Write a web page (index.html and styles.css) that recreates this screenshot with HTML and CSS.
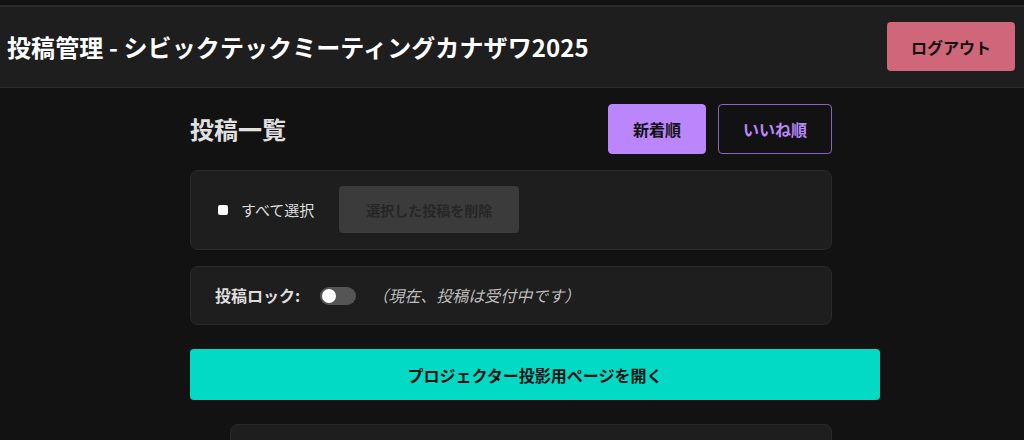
FILE: index.html
```html
<!DOCTYPE html>
<html lang="ja">
<head>
<meta charset="utf-8">
<title>投稿管理</title>
<link rel="stylesheet" href="styles.css">
</head>
<body>
<header class="app-header">
  <h1 class="app-title">投稿管理 - シビックテックミーティングカナザワ2025</h1>
  <button class="btn btn-logout">ログアウト</button>
</header>
<main class="container">
  <div class="list-head">
    <h2 class="list-title">投稿一覧</h2>
    <div class="sort-group">
      <button class="btn btn-sort active">新着順</button>
      <button class="btn btn-sort">いいね順</button>
    </div>
  </div>
  <section class="card select-bar">
    <label class="select-all"><input type="checkbox" class="check"><span>すべて選択</span></label>
    <button class="btn btn-delete">選択した投稿を削除</button>
  </section>
  <section class="card lock-bar">
    <span class="lock-label">投稿ロック:</span>
    <span class="toggle"><span class="knob"></span></span>
    <span class="lock-status">（現在、投稿は受付中です）</span>
  </section>
  <button class="btn btn-projector">プロジェクター投影用ページを開く</button>
  <ul class="post-list">
    <li class="card post-item"></li>
  </ul>
</main>
</body>
</html>
```

FILE: styles.css
```css
* { margin: 0; padding: 0; }
html, body { background: #121212; }
body {
  font-family: "Noto Sans CJK JP", "Noto Sans", sans-serif;
  color: #e0e0e0;
  padding-top: 5px;
  overflow: hidden;
}
.btn {
  font-family: inherit;
  cursor: pointer;
  border: 1px solid transparent;
  font-weight: 700;
  font-size: 16px;
  line-height: 20px;
}
.app-header {
  background: #1e1e1e;
  border-top: 2px solid #2c2c2c;
  border-bottom: 1px solid #2c2c2c;
  display: flex;
  align-items: center;
  justify-content: space-between;
  padding: 15px 9px 16px 7px;
}
.app-title {
  font-size: 24px;
  font-weight: 700;
  color: #ffffff;
  line-height: 32px;
  letter-spacing: 0.1px;
}
.btn-logout {
  background: #cf6679;
  color: #121212;
  border: none;
  border-radius: 4px;
  width: 128px;
  height: 49px;
}
.container {
  width: 642px;
  margin-left: calc(50% - 322px);
  padding-top: 16px;
}
.list-head {
  display: flex;
  align-items: center;
  justify-content: space-between;
}
.list-title {
  font-size: 24px;
  font-weight: 700;
  color: #e0e0e0;
  line-height: 32px;
}
.sort-group {
  display: flex;
  gap: 12px;
}
.btn-sort {
  height: 50px;
  padding: 0 24px;
  border-radius: 4px;
  background: transparent;
  color: #bb86fc;
  border-color: #8a62c0;
}
.btn-sort.active {
  background: #bb86fc;
  border-color: #bb86fc;
  color: #121212;
}
.card {
  background: #1e1e1e;
  border: 1px solid #2a2a2a;
  border-radius: 8px;
}
.select-bar {
  margin-top: 16px;
  display: flex;
  align-items: center;
  padding: 15px 24px 16px;
  gap: 25px;
}
.select-all {
  display: flex;
  align-items: center;
  gap: 13px;
  font-size: 15px;
  line-height: 22px;
  color: #dddddd;
}
.check {
  appearance: none;
  -webkit-appearance: none;
  width: 10px;
  height: 10px;
  margin-left: 3px;
  background: #ffffff;
  border-radius: 2px;
}
.btn-delete {
  height: 47px;
  padding: 0 26px;
  font-size: 14px;
  background: #3b3b3b;
  color: #262626;
  border-radius: 4px;
}
.lock-bar {
  margin-top: 16px;
  display: flex;
  align-items: center;
  padding: 18px 24px;
  line-height: 21px;
  font-size: 16px;
}
.lock-label {
  font-weight: 700;
  color: #dddddd;
}
.toggle {
  margin-left: 20px;
  width: 36px;
  height: 18px;
  border-radius: 9px;
  background: #555555;
  display: flex;
  align-items: center;
  padding-left: 2px;
  box-sizing: border-box;
}
.knob {
  width: 14px;
  height: 14px;
  border-radius: 50%;
  background: #ffffff;
}
.lock-status {
  margin-left: 16px;
  font-style: italic;
  color: #bdbdbd;
}
.btn-projector {
  display: block;
  margin-top: 24px;
  width: 100%;
  box-sizing: content-box;
  padding: 0 24px;
  height: 51px;
  background: #03dac6;
  color: #121212;
  border: none;
  border-radius: 4px;
}
.post-list {
  list-style: none;
  margin-top: 24px;
  padding-left: 40px;
}
.post-item {
  height: 80px;
}
```
